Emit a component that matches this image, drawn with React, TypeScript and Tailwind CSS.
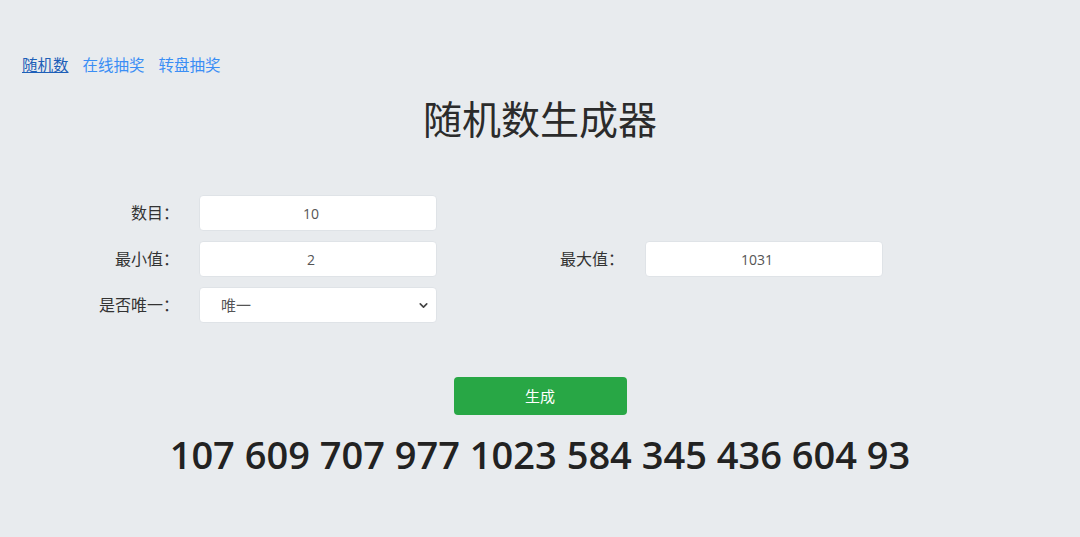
import { ChevronDown } from 'lucide-react';

const nums = [107, 609, 707, 977, 1023, 584, 345, 436, 604, 93];

const cjk = "font-['Open_Sans','Noto_Sans_CJK_SC',sans-serif]";

function Field({ value }: { value: string }) {
  return (
    <div className="w-[238px] h-[36px] bg-white rounded-[4px] border border-[#dfe3e7] flex items-center justify-center pr-[14px] text-[14px] text-[#555]">
      {value}
    </div>
  );
}

export default function App() {
  return (
    <div className={`min-h-[537px] w-[1080px] bg-[#e8ebee] text-[#333] ${cjk}`}>
      <nav className="flex gap-[14px] pl-[22px] pt-[54px] text-[15.5px] leading-[22px]">
        <a className="text-[#1d5fb8] underline">随机数</a>
        <a className="text-[#3a8ef5]">在线抽奖</a>
        <a className="text-[#3a8ef5]">转盘抽奖</a>
      </nav>

      <h1 className="mt-[18px] text-center text-[39px] leading-[50px] text-[#2b2b2b]">随机数生成器</h1>

      <div className="mt-[51px] flex flex-col gap-[10px] text-[16px]">
        <div className="flex items-center">
          <div className="w-[179px] text-right">数目：</div>
          <div className="ml-[20px]"><Field value="10" /></div>
        </div>
        <div className="flex items-center">
          <div className="w-[179px] text-right">最小值：</div>
          <div className="ml-[20px]"><Field value="2" /></div>
          <div className="w-[187px] text-right">最大值：</div>
          <div className="ml-[21px]"><Field value="1031" /></div>
        </div>
        <div className="flex items-center">
          <div className="w-[179px] text-right">是否唯一：</div>
          <div className="ml-[20px] w-[238px] h-[36px] bg-white rounded-[4px] border border-[#dfe3e7] flex items-center justify-between pl-[21px] pr-[6px] text-[15px] text-[#555]">
            <span>唯一</span>
            <ChevronDown size={13} strokeWidth={3} className="text-[#444]" />
          </div>
        </div>
      </div>

      <div className="mt-[54px] flex justify-center">
        <button className="w-[173px] h-[38px] bg-[#28a745] rounded-[4px] text-white text-[15px]">生成</button>
      </div>

      <div className="mt-[11px] text-center text-[38px] leading-[56px] font-semibold text-[#222]">
        {nums.join(' ')}
      </div>
    </div>
  );
}
